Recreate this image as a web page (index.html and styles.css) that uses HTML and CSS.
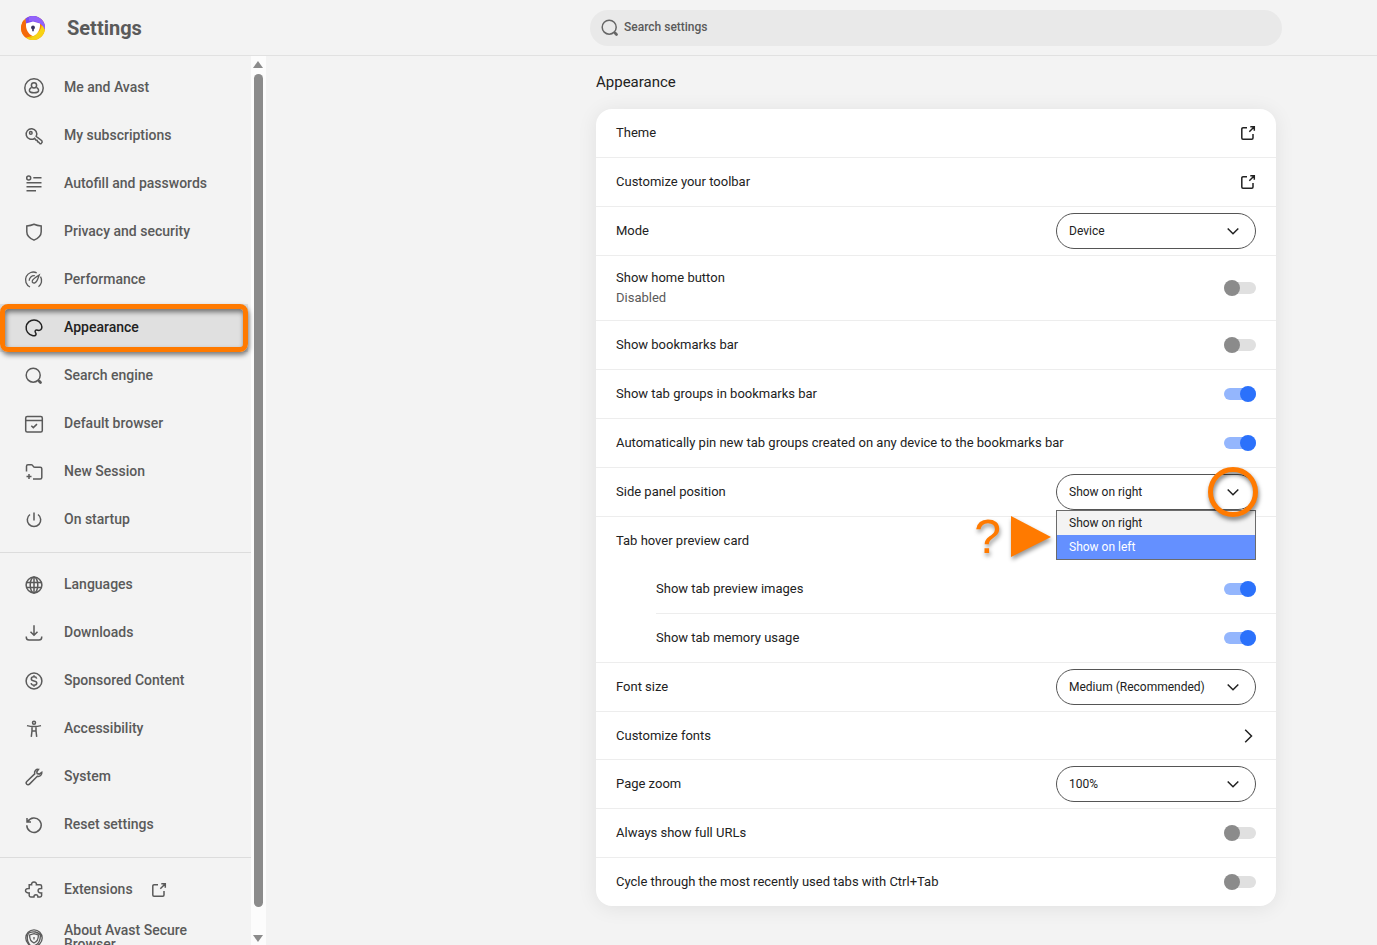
FILE: index.html
```html
<!DOCTYPE html>
<html lang="en">
<head>
    <meta charset="utf-8">
    <title>Settings</title>
    <link rel="stylesheet" href="styles.css">
</head>
<body>
    <svg class="defs" aria-hidden="true">
        <symbol id="external" viewBox="0 0 20 20">
            <path d="M9 4.700H5a1.200 1.200 0 0 0-1.200 1.200V15a1.200 1.200 0 0 0 1.200 1.200h8.800a1.200 1.200 0 0 0 1.200-1.200v-4M11.300 8.700l5-5M12.300 3.700h4v4"/>
        </symbol>
        <symbol id="chevron" viewBox="0 0 20 20"><path d="M4.700 7.500l5.300 5.300 5.300-5.300"/></symbol>
        <symbol id="search" viewBox="0 0 20 20">
            <circle cx="9.200" cy="9.200" r="7"/><path d="M14 14l2 2"/><path d="M15.300 15.300l1.200 1.200" stroke-width="2.800" stroke-linecap="round"/>
        </symbol>
    </svg>

    <header class="toolbar">
        <div class="brand">
            <svg class="logo" viewBox="0 0 24 24">
                <circle cx="12" cy="12" r="12" fill="#fb8500"/>
                <path d="M3 4A12 12 0 0 0 5 21.700L12 21 8 14z" fill="#f4690b"/>
                <path d="M5 21.700A12 12 0 0 0 24 12L21 7c0 7-5 11-10 13z" fill="#f7d313"/>
                <path d="M5 21.700c4.500 1 9-1 11.500-5l-4 3c-3 1.800-5.500 2.200-7.500 2z" fill="#e5b800"/>
                <path d="M4.500 2.600A12 12 0 0 1 23.900 13.500C22 8 17 6 11 7L5 8z" fill="#7b4df5"/>
                <path d="M8 .7A12 12 0 0 1 23.900 13.500C21 6 14 4.500 8 5z" fill="#9263fa"/>
                <path d="M12 5.500l7 2c.4 6-2 10.500-7 12.700-5-2.200-7.400-6.700-7-12.700z" fill="#fff"/>
                <circle cx="12" cy="11.500" r="1.900" fill="#37335e"/>
                <path d="M11.200 12h1.600v3.200h-1.600z" fill="#37335e"/>
            </svg>
            <h1>Settings</h1>
        </div>
        <div class="search-area">
            <label class="search">
                <svg class="icon"><use href="#search"/></svg>
                <input type="text" placeholder="Search settings" aria-label="Search settings">
            </label>
        </div>
    </header>

    <div class="page">
        <aside class="sidebar">
            <nav class="menu">
                <a href="#me" class="item">
                    <svg class="icon" viewBox="0 0 20 20"><circle cx="10" cy="10" r="9.200"/><circle cx="10" cy="7.300" r="2.600"/><path d="M7.600 9.300c-1.700.9-2.400 2.300-2.100 3.700.3 1.200 2 1.700 4.500 1.700s4.200-.5 4.500-1.700c.3-1.400-.4-2.800-2.100-3.700"/></svg>
                    Me and Avast
                </a>
                <a href="#subscriptions" class="item">
                    <svg class="icon" viewBox="0 0 20 20"><path d="M12.200 10.400l5.600 4.300c.5.700.3 2-.4 2.600-.5.400-1 .5-1.600.2l-1.300-1.500-.9-.1-.4-1.500-1.400-.4-1.200-1.700a5.300 5.300 0 1 1 1.600-1.900z"/><circle cx="6.800" cy="6.900" r="1.300"/></svg>
                    My subscriptions
                </a>
                <a href="#autofill" class="item">
                    <svg class="icon" viewBox="0 0 20 20"><circle cx="4.700" cy="4" r="2"/><path d="M9.300 3.800h8.200M2.500 8.800h15M2.500 12.800h15M2.500 16.800h9.500"/></svg>
                    Autofill and passwords
                </a>
                <a href="#privacy" class="item">
                    <svg class="icon" viewBox="0 0 20 20"><path d="M10 2.200c2.300 1 4.500 1.500 7.200 1.700v5.800c0 3.800-2.700 6.500-7.200 8.400-4.500-1.900-7.200-4.600-7.200-8.400V3.900C5.500 3.700 7.700 3.200 10 2.200z"/></svg>
                    Privacy and security
                </a>
                <a href="#performance" class="item">
                    <svg class="icon thin" viewBox="0 0 20 20"><path d="M6 17A7.500 7.500 0 0 1 12.700 2.800M16.500 6.700a7.500 7.500 0 0 1-2 10"/><path d="M5.200 10.800A5 5 0 0 1 10.800 5.700M8.200 11.200c.4-2.200 3.200-3.800 7-6.200-1.400 3.900-2.100 6.900-4.300 7.800-1.600.6-3-.3-2.700-1.600z"/></svg>
                    Performance
                </a>
                <a href="#appearance" class="item selected">
                    <svg class="icon" viewBox="0 0 20 20"><path d="M10.500 17.700c-.8.100-1.500 0-2.200-.2A7.900 7.900 0 1 1 17.900 9c-.1 2.500-1.700 3.700-3.800 3.300-1.100-.2-2.200-.5-2.800.3-.8 1.100.3 1.800.7 3 .3 1-.4 1.900-1.500 2.100z"/></svg>
                    Appearance
                    <span class="frame"></span>
                </a>
                <a href="#search-engine" class="item">
                    <svg class="icon"><use href="#search"/></svg>
                    Search engine
                </a>
                <a href="#default" class="item">
                    <svg class="icon" viewBox="0 0 20 20"><rect x="1.700" y="2.500" width="16.600" height="15.500" rx="1.500"/><path d="M1.700 6.500h16.600M7.300 11.700l2 1.900 3.700-3.500"/></svg>
                    Default browser
                </a>
                <a href="#session" class="item">
                    <svg class="icon" viewBox="0 0 20 20"><path d="M2.500 9.500V4.300c0-1 .6-1.500 1.500-1.500h3.500c.8 0 1.200.6 1.800 1.500.4.700.9 1 1.700 1h5.200c.9 0 1.600.6 1.600 1.500v8.700c0 .9-.7 1.500-1.600 1.500H9M5 12v5M2.500 14.500h5"/></svg>
                    New Session
                </a>
                <a href="#startup" class="item">
                    <svg class="icon" viewBox="0 0 20 20"><path d="M6 4.500a6.700 6.700 0 1 0 8 0M10 2.500v8"/></svg>
                    On startup
                </a>
                <hr>
                <a href="#languages" class="item">
                    <svg class="icon" viewBox="0 0 20 20"><circle cx="10" cy="10" r="7.900"/><ellipse cx="10" cy="10" rx="3.800" ry="7.900"/><path d="M2.700 7.500h14.600M2.700 12.500h14.600M10 2v16"/></svg>
                    Languages
                </a>
                <a href="#downloads" class="item">
                    <svg class="icon" viewBox="0 0 20 20"><path d="M10 2.200v10M6.500 8.800l3.500 3.500 3.500-3.500M2.300 13.500v.7c0 1.700 1 2.800 2.700 2.800h10c1.700 0 2.700-1.100 2.700-2.800v-.7"/></svg>
                    Downloads
                </a>
                <a href="#sponsored" class="item">
                    <svg class="icon" viewBox="0 0 20 20"><circle cx="10" cy="10" r="7.900"/><path d="M12.700 7.700c-.3-1.300-1.300-1.900-2.700-1.900-1.500 0-2.700.8-2.700 2.100 0 2.900 5.500 1.300 5.500 4.200 0 1.400-1.200 2.200-2.800 2.200s-2.600-.8-2.900-2.100M10 4.300v1.500M10 14.300v1.500"/></svg>
                    Sponsored Content
                </a>
                <a href="#accessibility" class="item">
                    <svg class="icon" viewBox="0 0 20 20"><circle cx="10" cy="3.700" r="1.500"/><path d="M3 6.600c4.500 1.200 9.500 1.200 14 0M8 7.500v4.300l-.7 6M12 7.500v4.300l.7 6M8.300 12h3.400"/></svg>
                    Accessibility
                </a>
                <a href="#system" class="item">
                    <svg class="icon" viewBox="0 0 20 20"><path d="M14.500 2.400c-2.500-.3-4.500 1.900-3.800 4.500L2.800 14.500c-1 1-.5 2.200 0 2.700s1.800.8 2.700-.1l7.800-7.800c2.600.7 4.800-1.400 4.500-4l-2.600 1.800-2-.5-.4-1.800z"/></svg>
                    System
                </a>
                <a href="#reset" class="item">
                    <svg class="icon" viewBox="0 0 20 20"><path d="M3.800 6.500a7.200 7.200 0 1 1-1 3.700M3 3v4h4"/></svg>
                    Reset settings
                </a>
                <hr>
                <a href="#extensions" class="item">
                    <svg class="icon" viewBox="0 0 20 20"><path d="M5.200 4.800h2.400C7.300 3 8.400 1.900 10 1.900S12.700 3 12.400 4.800h3.700c1 0 1.500.5 1.500 1.400v2.300c-2.400-.2-3.500.7-3.500 2.200s1.100 2.400 3.500 2.200v2.700c0 .9-.5 1.400-1.500 1.400h-2.200c0-1.500-.7-2.300-2-2.300s-2 .8-2 2.300H6.700c-1 0-1.500-.5-1.500-1.400v-2.700c-2.200.2-3.700-.7-3.700-2.200S3 8.300 5.200 8.500z"/></svg>
                    Extensions
                    <svg class="icon external"><use href="#external"/></svg>
                </a>
                <a href="#about" class="item">
                    <svg class="icon thin" viewBox="0 0 20 20"><circle cx="10" cy="10" r="8.200"/><path d="M10 5.700l4.300 1.300c.3 3.700-1.200 6.500-4.300 8-3.100-1.500-4.600-4.300-4.300-8zM3.500 5.500c5-3 11.500-2 14 3M9 18.200c5-1.500 7.800-5.500 7.200-11.500M5.500 16.700C2.700 13 2.500 9.500 4.500 5M10 9v2.500"/></svg>
                    About Avast Secure Browser
                </a>
            </nav>
            <div class="scrollbar">
                <span class="arrow up"></span>
                <span class="thumb"></span>
                <span class="arrow down"></span>
            </div>
        </aside>

        <main class="content">
            <section class="section">
                <h2>Appearance</h2>
                <div class="card">
                    <a href="#theme" class="row">Theme <svg class="icon"><use href="#external"/></svg></a>
                    <a href="#toolbar" class="row">Customize your toolbar <svg class="icon"><use href="#external"/></svg></a>
                    <div class="row">
                        <label for="mode">Mode</label>
                        <div class="dropdown">
                            <select id="mode"><option>Device</option></select>
                            <svg class="icon chevron"><use href="#chevron"/></svg>
                        </div>
                    </div>
                    <div class="row tall">
                        <label for="home">Show home button<small>Disabled</small></label>
                        <input type="checkbox" class="toggle" id="home">
                    </div>
                    <div class="row">
                        <label for="bookmarks">Show bookmarks bar</label>
                        <input type="checkbox" class="toggle" id="bookmarks">
                    </div>
                    <div class="row">
                        <label for="groups">Show tab groups in bookmarks bar</label>
                        <input type="checkbox" class="toggle" id="groups" checked>
                    </div>
                    <div class="row">
                        <label for="pin">Automatically pin new tab groups created on any device to the bookmarks bar</label>
                        <input type="checkbox" class="toggle" id="pin" checked>
                    </div>
                    <div class="row">
                        <label for="side-panel">Side panel position</label>
                        <div class="dropdown">
                            <select id="side-panel"><option>Show on right</option><option>Show on left</option></select>
                            <svg class="icon chevron"><use href="#chevron"/></svg>
                            <ul class="options" role="listbox" aria-label="Side panel position">
                                <li role="option">Show on right</li>
                                <li role="option" class="active" aria-selected="true">Show on left</li>
                            </ul>
                            <span class="ring"></span>
                            <div class="pointer">
                                <span class="question">?</span>
                                <svg viewBox="0 0 40 42"><path d="M0 0l40 21L0 41z"/></svg>
                            </div>
                        </div>
                    </div>
                    <div class="row">Tab hover preview card</div>
                    <div class="subrows">
                        <div class="row">
                            <label for="images">Show tab preview images</label>
                            <input type="checkbox" class="toggle" id="images" checked>
                        </div>
                        <div class="row">
                            <label for="memory">Show tab memory usage</label>
                            <input type="checkbox" class="toggle" id="memory" checked>
                        </div>
                    </div>
                    <div class="row">
                        <label for="font-size">Font size</label>
                        <div class="dropdown">
                            <select id="font-size"><option>Medium (Recommended)</option></select>
                            <svg class="icon chevron"><use href="#chevron"/></svg>
                        </div>
                    </div>
                    <a href="#fonts" class="row subpage">Customize fonts <svg class="icon" viewBox="0 0 20 20"><path d="M7.200 3.700l6.300 6.300-6.300 6.300"/></svg></a>
                    <div class="row">
                        <label for="zoom">Page zoom</label>
                        <div class="dropdown">
                            <select id="zoom"><option>100%</option></select>
                            <svg class="icon chevron"><use href="#chevron"/></svg>
                        </div>
                    </div>
                    <div class="row">
                        <label for="urls">Always show full URLs</label>
                        <input type="checkbox" class="toggle" id="urls">
                    </div>
                    <div class="row">
                        <label for="cycle">Cycle through the most recently used tabs with Ctrl+Tab</label>
                        <input type="checkbox" class="toggle" id="cycle">
                    </div>
                </div>
            </section>
        </main>
    </div>
</body>
</html>
```
FILE: styles.css
```css
* { box-sizing: border-box; }
body { margin: 0; height: 100vh; display: flex; flex-direction: column; overflow: hidden; background: #f3f3f3; color: #222; font-family: Roboto, Arial, sans-serif; font-size: 13px; line-height: 20px; }
a { color: inherit; text-decoration: none; }
.defs { display: none; }
.icon { width: 20px; height: 20px; flex: none; fill: none; stroke: currentColor; stroke-width: 1.5; }
.icon.thin { stroke-width: 1.3; }

/* top bar */
.toolbar { display: flex; flex: none; height: 56px; border-bottom: 1px solid #e1e1e1; }
.brand { display: flex; align-items: center; width: 495px; padding-left: 21px; gap: 22px; }
.logo { width: 24px; height: 24px; }
h1 { margin: 0; font-size: 20px; font-weight: 700; color: #5a5a5a; }
.search-area { flex: 1; display: flex; justify-content: center; align-items: center; }
.search { display: flex; align-items: center; gap: 4px; width: 692px; height: 36px; padding: 0 10px; border-radius: 18px; background: #e9e9e9; color: #666; }
.search input { flex: 1; border: 0; padding: 0 0 2px; background: none; outline: none; font: 500 12px/20px Roboto, Arial, sans-serif; }
.search input::placeholder { color: #5a5a5a; opacity: 1; }

/* side menu */
.page { flex: 1; display: flex; min-height: 0; }
.sidebar { display: flex; flex: none; width: 266px; overflow: hidden; }
.menu { flex: 1; padding-top: 8px; }
.item { position: relative; display: flex; align-items: center; gap: 20px; height: 48px; padding: 0 40px 2px 24px; color: #5a5a5a; font-size: 14px; font-weight: 500; line-height: 14px; }
.item .icon { margin-top: 2px; }
.item .external { margin-left: -4px; }
.item.selected { margin-right: 3px; background: #e0e0e0; color: #222; }
.menu hr { margin: 8px 0; border: 0; border-top: 1px solid #dcdcdc; }
.frame { position: absolute; inset: 0; border: 5px solid #ff7a00; border-radius: 8px; box-shadow: 1px 3px 5px rgba(0,0,0,0.5), inset 1px 3px 5px rgba(0,0,0,0.5); }
.scrollbar { display: flex; flex-direction: column; align-items: center; width: 15px; padding: 5px 0 3px; background: #fcfcfc; }
.thumb { flex: 1; width: 9px; margin: 6px 0 28px; border-radius: 5px; background: #8b8b8b; }
.arrow { margin-right: 1px; border: 5px solid transparent; }
.up { border-top: 0; border-bottom: 7px solid #8b8b8b; }
.down { border-bottom: 0; border-top: 7px solid #8b8b8b; }

/* settings card */
.content { flex: 1; padding: 16px 0 40px 229px; }
.section { max-width: 680px; margin: 0 auto; }
h2 { margin: 0 0 17px; font-size: 15px; font-weight: 400; }
.card { border-radius: 16px; background: #fff; box-shadow: 0 2px 20px rgba(0,0,0,0.08); }
.row { display: flex; align-items: center; justify-content: space-between; min-height: 49px; padding: 0 20px; border-top: 1px solid #ededed; }
.row:first-child { min-height: 48px; border-top: 0; }
.row.tall { min-height: 65px; }
.row.subpage { min-height: 48px; }
.row > .icon { margin-right: -2px; }
.row small { display: block; color: #5a5a5a; font-size: 13px; }
.subrows { padding-left: 60px; }
.subrows .row { padding-left: 0; }

/* controls */
.dropdown { position: relative; width: 200px; }
select { display: block; width: 100%; height: 36px; padding: 0 36px 0 12px; appearance: none; border: 1px solid #555; border-radius: 18px; background: #fff; color: #222; font: 12px Roboto, Arial, sans-serif; }
.chevron { position: absolute; top: 8px; right: 13px; pointer-events: none; }
.toggle { appearance: none; position: relative; width: 32px; height: 16px; margin: 0; }
.toggle::before { content: ""; position: absolute; inset: 2px 0; border-radius: 6px; background: #e0e0e0; }
.toggle::after { content: ""; position: absolute; left: 0; width: 16px; height: 16px; border-radius: 50%; background: #8b8b8b; }
.toggle:checked::before { background: #94b6fd; }
.toggle:checked::after { left: auto; right: 0; background: #2b71fb; }
.options { position: absolute; top: 36px; left: 0; z-index: 1; width: 100%; margin: 0; padding: 0; border: 1px solid #6b6b6b; list-style: none; background: #f3f3f3; font-size: 12px; line-height: 24px; }
.options li { padding-left: 12px; }
.options .active { background: #6490ff; color: #fff; }

/* callouts */
.ring { position: absolute; top: -7px; right: -2px; z-index: 2; width: 50px; height: 50px; border: 5px solid #ff7a00; border-radius: 50%; filter: drop-shadow(1px 3px 2px rgba(0,0,0,0.5)); }
.pointer { position: absolute; top: 42px; right: 205px; display: flex; align-items: center; gap: 10px; filter: drop-shadow(1px 3px 2px rgba(0,0,0,0.4)); }
.pointer svg { width: 40px; height: 42px; fill: #ff7a00; }
.question { color: #ff7a00; font: 48px/42px "Liberation Sans", Arial, sans-serif; }
```
